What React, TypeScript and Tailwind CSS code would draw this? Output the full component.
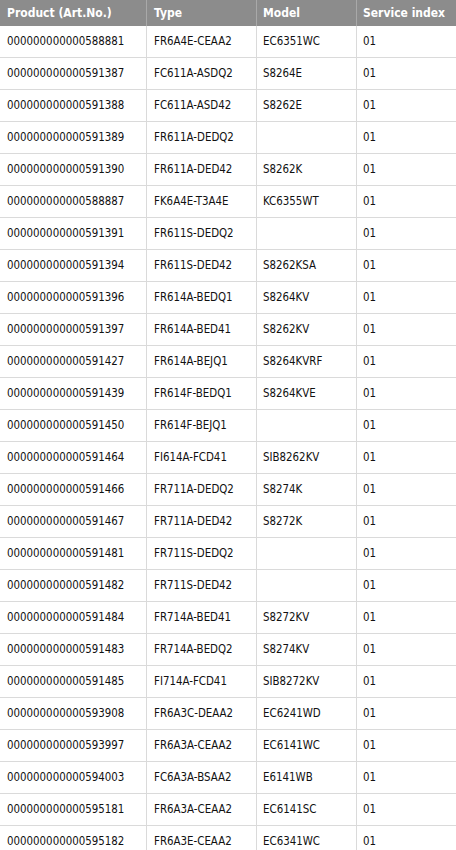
const rows: [string, string, string][] = [
  ['000000000000588881', 'FR6A4E-CEAA2', 'EC6351WC'],
  ['000000000000591387', 'FC611A-ASDQ2', 'S8264E'],
  ['000000000000591388', 'FC611A-ASD42', 'S8262E'],
  ['000000000000591389', 'FR611A-DEDQ2', ''],
  ['000000000000591390', 'FR611A-DED42', 'S8262K'],
  ['000000000000588887', 'FK6A4E-T3A4E', 'KC6355WT'],
  ['000000000000591391', 'FR611S-DEDQ2', ''],
  ['000000000000591394', 'FR611S-DED42', 'S8262KSA'],
  ['000000000000591396', 'FR614A-BEDQ1', 'S8264KV'],
  ['000000000000591397', 'FR614A-BED41', 'S8262KV'],
  ['000000000000591427', 'FR614A-BEJQ1', 'S8264KVRF'],
  ['000000000000591439', 'FR614F-BEDQ1', 'S8264KVE'],
  ['000000000000591450', 'FR614F-BEJQ1', ''],
  ['000000000000591464', 'FI614A-FCD41', 'SIB8262KV'],
  ['000000000000591466', 'FR711A-DEDQ2', 'S8274K'],
  ['000000000000591467', 'FR711A-DED42', 'S8272K'],
  ['000000000000591481', 'FR711S-DEDQ2', ''],
  ['000000000000591482', 'FR711S-DED42', ''],
  ['000000000000591484', 'FR714A-BED41', 'S8272KV'],
  ['000000000000591483', 'FR714A-BEDQ2', 'S8274KV'],
  ['000000000000591485', 'FI714A-FCD41', 'SIB8272KV'],
  ['000000000000593908', 'FR6A3C-DEAA2', 'EC6241WD'],
  ['000000000000593997', 'FR6A3A-CEAA2', 'EC6141WC'],
  ['000000000000594003', 'FC6A3A-BSAA2', 'E6141WB'],
  ['000000000000595181', 'FR6A3A-CEAA2', 'EC6141SC'],
  ['000000000000595182', 'FR6A3E-CEAA2', 'EC6341WC'],
];

const grid = 'grid grid-cols-[147px_110px_100px_1fr]';

export default function App() {
  return (
    <div className="w-[456px] h-[850px] overflow-hidden bg-white text-[#111] font-['DejaVu_Sans_Condensed','Liberation_Sans',sans-serif] text-[11.4px]">
      <div className={`${grid} h-[26px] bg-[#8c8c8c] text-white font-bold text-[12px]`}>
        <div className="flex items-center px-[7px] border-r border-[#a9a9a9]">Product (Art.No.)</div>
        <div className="flex items-center px-[7px] border-r border-[#a9a9a9]">Type</div>
        <div className="flex items-center px-[6px] border-r border-[#a9a9a9]">Model</div>
        <div className="flex items-center px-[6px]">Service index</div>
      </div>
      {rows.map(([art, type, model]) => (
        <div key={art} className={`${grid} h-[32px] border-b border-[#dadada]`}>
          <div className="flex items-center px-[7px] border-r border-[#dadada]">{art}</div>
          <div className="flex items-center px-[7px] border-r border-[#dadada]">{type}</div>
          <div className="flex items-center px-[6px] border-r border-[#dadada]">{model}</div>
          <div className="flex items-center px-[6px]">01</div>
        </div>
      ))}
    </div>
  );
}
